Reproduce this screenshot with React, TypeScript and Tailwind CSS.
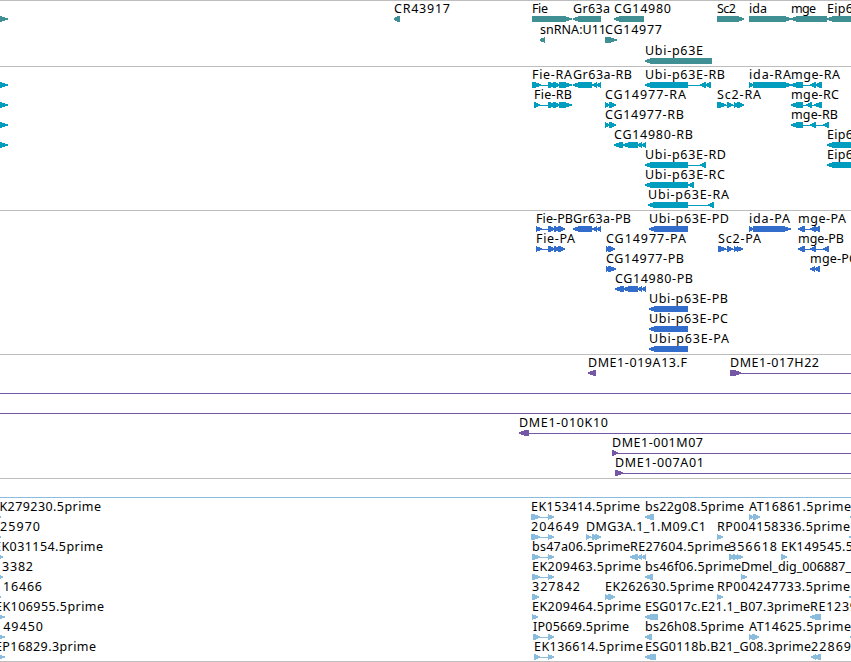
type Dir = "L" | "R";
type Span = [number, number];

interface Feature {
	dir: Dir;
	exons: Span[];
	label?: string;
	// label extent: [left, right]
	at?: Span;
	line?: Span;
}

interface TrackData {
	id: string;
	color: string;
	rowHeight: number;
	className: string;
	rows: Feature[][];
}

const WIDTH = 851;
const HEAD = 7;

const f = (label: string, at: Span, dir: Dir, exons: Span[], line?: Span): Feature => ({
	label,
	at,
	dir,
	exons,
	line,
});
const stub = (dir: Dir, span: Span): Feature => ({ dir, exons: [span] });
const bar = (): Feature => ({ dir: "R", exons: [], line: [0, WIDTH] });

const leftGene = stub("R", [-20, 7.5]);
const cg77: Span[] = [[605, 610], [609, 616]];
const estPair: Span[] = [[532, 540], [548, 553.5]];

const tracks: TrackData[] = [
	{
		id: "gene",
		color: "#408f95",
		rowHeight: 21,
		className: "pb-px",
		rows: [
			[
				leftGene,
				f("CR43917", [394, 450], "L", [[393.5, 400]]),
				f("Fie", [532, 548], "R", [[532, 571.5]]),
				f("Gr63a", [573, 610], "L", [[573, 601]]),
				f("CG14980", [614, 671], "L", [[614, 644]]),
				f("Sc2", [717, 736], "R", [[717, 744]]),
				f("ida", [749, 767], "R", [[749, 791]]),
				f("mge", [791, 816], "L", [[791, 827]]),
				f("Eip6", [827, 853], "L", [[827, 880]]),
			],
			[
				f("snRNA:U11", [540, 606], "L", [[539.5, 545]]),
				f("CG14977", [605, 662], "R", [[605, 616.5]]),
			],
			[f("Ubi-p63E", [645, 703], "L", [[645, 712]])],
		],
	},
	{
		id: "transcript",
		color: "#009dbf",
		rowHeight: 20,
		className: "pb-0.5",
		rows: [
			[
				leftGene,
				f("Fie-RA", [532, 572], "R", [[532, 541], [548, 555], [553, 560], [559, 571.5]]),
				f("Gr63a-RB", [573, 632], "L", [[573, 592], [592, 597], [596, 601]]),
				f("Ubi-p63E-RB", [645, 725], "L", [[645, 688], [700, 706], [705, 711]]),
				f("ida-RA", [749, 791], "R", [[749, 753.5], [753, 791.5]]),
				f("mge-RA", [791, 840], "L", [[791, 803], [810, 816], [815, 822]]),
			],
			[
				leftGene,
				f("Fie-RB", [534, 572], "R", [[534, 540], [548, 555], [553, 560], [559, 571.5]]),
				f("CG14977-RA", [605, 686], "R", cg77),
				f("Sc2-RA", [717, 761], "R", [[717, 726], [727, 733], [734, 739], [737, 744]]),
				f("mge-RC", [791, 839], "L", [[791, 803], [806, 812], [814, 822]]),
			],
			[
				leftGene,
				f("CG14977-RB", [605, 684], "R", cg77),
				f("mge-RB", [791, 838], "L", [[791, 803], [810, 816], [823, 829]]),
			],
			[
				leftGene,
				f("CG14980-RB", [614, 693], "L", [[614, 623], [623, 638], [637, 642], [641, 646]]),
				f("Eip6", [827, 853], "L", [[827, 880]]),
			],
			[
				f("Ubi-p63E-RD", [645, 726], "L", [[645, 688], [700, 706]]),
				f("Eip6", [827, 853], "L", [[827, 880]]),
			],
			[f("Ubi-p63E-RC", [645, 725], "L", [[645, 688], [688, 694]])],
			[f("Ubi-p63E-RA", [648, 729], "L", [[648, 688], [708, 714]])],
		],
	},
	{
		id: "cds",
		color: "#336dcb",
		rowHeight: 20,
		className: "pb-0.5",
		rows: [
			[
				f("Fie-PB", [536, 573], "R", [[536, 541.5], [548, 555], [554, 560], [558, 564.5]]),
				f("Gr63a-PB", [573, 631], "L", [[573, 592], [592, 597], [596, 601]]),
				f("Ubi-p63E-PD", [649, 729], "L", [[649, 688]]),
				f("ida-PA", [749, 790], "R", [[749, 753], [753, 790.5]]),
				f("mge-PA", [798, 846], "L", [[798, 805], [810, 816], [814, 820]]),
			],
			[
				f("Fie-PA", [536, 575], "R", [[536, 541.5], [548, 555], [554, 560], [558, 564.5]]),
				f("CG14977-PA", [606, 686], "R", [[606, 610], [608, 614.5]]),
				f("Sc2-PA", [718, 761], "R", [[718, 726], [727, 733], [734, 739], [737, 742.5]]),
				f("mge-PB", [798, 844], "L", [[798, 805], [810, 816], [823, 829]]),
			],
			[
				f("CG14977-PB", [606, 684], "R", [[606, 610], [608, 616]]),
				f("mge-PC", [810, 857], "L", [[810, 815], [814, 820]]),
			],
			[f("CG14980-PB", [615, 693], "L", [[615, 624], [623, 638], [637, 642], [641, 646]])],
			[f("Ubi-p63E-PB", [649, 728], "L", [[649, 688]])],
			[f("Ubi-p63E-PC", [649, 728], "L", [[649, 688]])],
			[f("Ubi-p63E-PA", [649, 729], "L", [[649, 688]])],
		],
	},
	{
		id: "tiling-bac",
		color: "#7558a5",
		rowHeight: 20,
		className: "pb-0.5",
		rows: [
			[
				f("DME1-019A13.F", [588, 687], "L", [[588, 596]]),
				f("DME1-017H22", [730, 819], "R", [[730, 741]], [730, WIDTH]),
			],
			[bar()],
			[bar()],
			[f("DME1-010K10", [519, 608], "L", [[519, 529]], [519, WIDTH])],
			[f("DME1-001M07", [612, 703], "R", [[612, 618]], [612, WIDTH])],
			[f("DME1-007A01", [615, 704], "R", [[615, 622.5]], [615, WIDTH])],
		],
	},
	{
		id: "est",
		color: "#8abcdd",
		rowHeight: 20,
		className: "pb-px",
		rows: [
			[bar()],
			[
				f("EK279230.5prime", [-8, 101], "R", [[-4, 1]]),
				f("EK153414.5prime", [531, 640], "R", [[531, 540], [548, 553.5]]),
				f("bs22g08.5prime", [645, 744], "L", [[645, 654]]),
				f("AT16861.5prime", [749, 851], "R", [[749, 754], [753, 759.5]]),
				stub("L", [850, 856]),
			],
			[
				f("25970", [0, 40], "R", [[-4, 1]]),
				f("204649", [531, 579], "R", [[531, 540], [548, 553.5]]),
				f("DMG3A.1_1.M09.C1", [586, 706], "R", [[586, 591], [592, 598], [595, 601]]),
				f("RP004158336.5prime", [717, 850], "R", [[717, 722.5]]),
				stub("L", [849, 856]),
			],
			[
				f("EK031154.5prime", [-6, 103], "R", [[-4, 2.5]]),
				f("bs47a06.5prime", [532, 630], "R", estPair),
				f("RE27604.5prime", [630, 731], "L", [[630, 638], [637, 642], [641, 646]]),
				f("356618", [729, 777], "R", [[729, 735], [733, 739], [737, 742.5]]),
				f("EK149545.5prime", [781, 890], "R", [[781, 787]]),
			],
			[
				f("3382", [2, 33], "R", [[-4, 2.5]]),
				f("EK209463.5prime", [532, 641], "R", estPair),
				f("bs46f06.5prime", [645, 741], "L", [[645, 653]]),
				f("Dmel_dig_006887_", [741, 851], "R", [[741, 746.5]]),
			],
			[
				f("16466", [3, 42], "R", [[-4, 1]]),
				f("327842", [532, 580], "R", [[532, 538.5]]),
				f("EK262630.5prime", [605, 714], "R", [[605, 610], [608, 614.5]]),
				f("RP004247733.5prime", [717, 850], "R", [[717, 722.5]]),
				stub("L", [849, 856]),
			],
			[
				f("EK106955.5prime", [-5, 104], "R", [[-8, 4.5]]),
				f("EK209464.5prime", [532, 641], "R", [[532, 537.5]]),
				f("ESG017c.E21.1_B07.3prime", [645, 810], "L", [[645, 658]]),
				f("RE1239", [810, 857], "L", [[810, 821]]),
			],
			[
				f("149450", [-5, 43], "R", [[-8, 4.5]]),
				f("IP05669.5prime", [533, 629], "R", [[533, 540], [548, 554]]),
				f("bs26h08.5prime", [645, 744], "L", [[645, 652]]),
				f("AT14625.5prime", [749, 851], "R", [[749, 754], [752, 758.5]]),
				stub("L", [850, 856]),
			],
			[
				f("EP16829.3prime", [-5, 96], "R", [[-8, 4.5]]),
				f("EK136614.5prime", [534, 643], "R", [[534, 540], [548, 553.5]]),
				f("ESG0118b.B21_G08.3prime", [645, 811], "L", [[645, 656]]),
				f("22869", [811, 851], "L", [[811, 816], [814, 821]]),
			],
		],
	},
];

const exonPoints = ([x1, x2]: Span, dir: Dir) => {
	// short exons are almost all head, longer ones keep a square body
	const width = x2 - x1;
	const head = width < 6 ? width : Math.min(HEAD, width * 0.8);
	if (dir === "R") {
		const s = x2 - head;
		const m = s + head * 0.5;
		return `${x1},14 ${s},14 ${m},15 ${x2},16.4 ${x2},17.6 ${m},19 ${s},20 ${x1},20`;
	}
	const s = x1 + head;
	const m = s - head * 0.5;
	return `${x2},14 ${s},14 ${m},15 ${x1},16.4 ${x1},17.6 ${m},19 ${s},20 ${x2},20`;
};

const FeatureGlyph = ({ feature, color }: { feature: Feature; color: string }) => {
	const { exons, dir, label, at } = feature;
	const line = feature.line ?? (exons.length > 1 ? [exons[0][0], exons[exons.length - 1][1]] : null);

	return (
		<g>
			{line && (
				<rect
					x={line[0]}
					y={17}
					width={line[1] - line[0]}
					height={1}
					fill={color}
					shapeRendering="crispEdges"
				/>
			)}
			{exons.map((exon, i) => (
				<polygon
					key={i}
					points={exonPoints(exon, dir)}
					fill={color}
					shapeRendering="crispEdges"
				/>
			))}
			{label && at && (
				<text x={at[0]} y={11} textLength={at[1] - at[0]} className="fill-black">
					{label}
				</text>
			)}
		</g>
	);
};

const Track = ({ track }: { track: TrackData }) => (
	<section className={`border-t border-[#bdbdbd] pt-px ${track.className}`}>
		{track.rows.map((row, i) => (
			<svg
				key={i}
				width={WIDTH}
				height={track.rowHeight}
				className="block overflow-visible font-['Noto_Sans','DejaVu_Sans',sans-serif] text-[12.5px]"
			>
				{row.map((feature, j) => (
					<FeatureGlyph key={j} feature={feature} color={track.color} />
				))}
			</svg>
		))}
	</section>
);

export default function App() {
	return (
		<main className="flex h-[662px] w-[851px] flex-col overflow-hidden border-b border-[#bdbdbd] bg-white">
			{tracks.map(track => (
				<Track key={track.id} track={track} />
			))}
		</main>
	);
}
